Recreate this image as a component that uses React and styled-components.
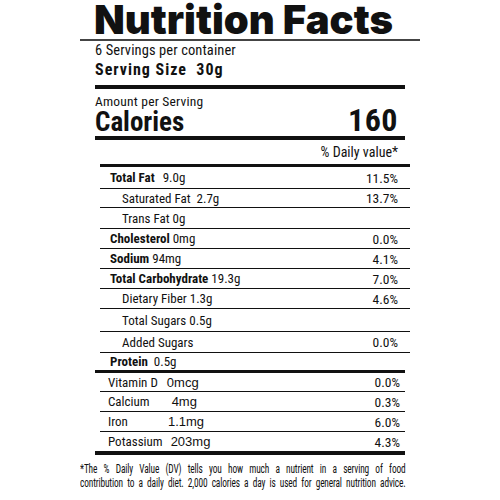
import React from "react";
import styled, { createGlobalStyle } from "styled-components";

const Global = createGlobalStyle`
  html, body { margin: 0; padding: 0; background: #fff; }
  body { font-family: "Roboto Condensed", "Roboto", "Liberation Sans", sans-serif; color: #111; }
`;

const Page = styled.div`
  width: 500px;
  height: 500px;
  box-sizing: border-box;
  padding-left: 80px;
  overflow: hidden;
`;

const Label = styled.div`
  width: 340px;
  display: flex;
  flex-direction: column;
`;

const Title = styled.h1`
  margin: 0;
  padding: 0 0 0 14px;
  height: 39px;
  line-height: 39px;
  font-family: "Inter", "Roboto", sans-serif;
  font-weight: 900;
  font-size: 40px;
  color: #111;
  border-bottom: 2px solid #444;
  white-space: nowrap;
`;

const Block = styled.div`
  margin: 0 15px;
  padding-bottom: ${(p) => p.$pb}px;
  border-bottom: 4px solid #111;
  display: flex;
  flex-direction: column;
`;

const Line = styled.div`
  margin-top: ${(p) => p.$mt}px;
  font-size: ${(p) => p.$size}px;
  font-weight: ${(p) => (p.$bold ? 700 : 400)};
  line-height: ${(p) => p.$lh}px;
  letter-spacing: ${(p) => p.$ls || 0}px;
  white-space: pre;
`;

const CalRow = styled.div`
  display: flex;
  justify-content: space-between;
  align-items: baseline;
  font-weight: 700;
  font-size: 27px;
  line-height: 22px;
  padding-right: 7px;
`;

const CalNumber = styled.span`
  font-size: 32px;
  letter-spacing: 0.5px;
`;

const NutrientTable = styled.div`
  margin: 0 10px 0 20px;
  display: flex;
  flex-direction: column;
`;

const HeadRow = styled.div`
  display: flex;
  align-items: center;
  justify-content: flex-end;
  height: 24px;
  padding-right: 12px;
  border-bottom: 3px solid #111;
  font-size: 14px;
`;

const Row = styled.div`
  display: flex;
  align-items: center;
  justify-content: space-between;
  height: ${(p) => p.$h}px;
  border-bottom: 1px solid #111;
  padding: 0 12px 0 ${(p) => (p.$indent ? 22 : 10)}px;
  font-size: 13px;
  &:last-child { border-bottom: none; }
`;

const Name = styled.span`
  white-space: nowrap;
  font-weight: ${(p) => (p.$bold ? 700 : 400)};
`;

const Amount = styled.span`
  font-weight: 400;
  margin-left: ${(p) => p.$gap}px;
`;

const Pct = styled.span`
  font-size: 13.5px;
`;

const VitaminTable = styled.div`
  margin: 0 15px;
  border-top: 3px solid #111;
  border-bottom: 4px solid #111;
  display: flex;
  flex-direction: column;
`;

const VRow = styled.div`
  margin-left: 5px;
  display: flex;
  align-items: center;
  justify-content: space-between;
  height: ${(p) => p.$h}px;
  border-bottom: 1px solid #111;
  padding: 0 5px 0 8px;
  font-size: 13px;
  &:last-child { border-bottom: none; }
`;

const VValue = styled.span`
  font-family: "Liberation Sans", sans-serif;
  font-size: 13px;
  margin-left: ${(p) => p.$gap}px;
`;

const FootWrap = styled.div`
  width: 325px;
  height: 36px;
  margin-top: 7px;
`;

const Foot = styled.p`
  margin: 0;
  width: 434px;
  font-size: 12.5px;
  line-height: 14px;
  letter-spacing: -0.2px;
  text-align: justify;
  text-align-last: justify;
  transform: scaleX(0.75);
  transform-origin: left top;
`;

const nutrients = [
  { name: "Total Fat", bold: true, value: "9.0g", gap: 8, pct: "11.5%", h: 21 },
  { name: "Saturated Fat", value: "2.7g", gap: 6, pct: "13.7%", indent: true, h: 18 },
  { name: "Trans Fat", value: "0g", gap: 3, pct: "", indent: true, h: 20 },
  { name: "Cholesterol", bold: true, value: "0mg", gap: 3, pct: "0.0%", h: 19 },
  { name: "Sodium", bold: true, value: "94mg", gap: 3, pct: "4.1%", h: 19 },
  { name: "Total Carbohydrate", bold: true, value: "19.3g", gap: 3, pct: "7.0%", h: 19 },
  { name: "Dietary Fiber", value: "1.3g", gap: 3, pct: "4.6%", indent: true, h: 19 },
  { name: "Total Sugars", value: "0.5g", gap: 3, pct: "", indent: true, h: 22 },
  { name: "Added Sugars", value: "", gap: 0, pct: "0.0%", indent: true, h: 20 },
  { name: "Protein", bold: true, value: "0.5g", gap: 6, pct: "", h: 17 },
];

const vitamins = [
  { name: "Vitamin D", value: "0mcg", gap: 9, pct: "0.0%", h: 18 },
  { name: "Calcium", value: "4mg", gap: 22, pct: "0.3%", h: 19 },
  { name: "Iron", value: "1.1mg", gap: 40, pct: "6.0%", h: 19 },
  { name: "Potassium", value: "203mg", gap: 8, pct: "4.3%", h: 19 },
];

export default function App() {
  return (
    <>
      <Global />
      <Page>
        <Label>
          <Title>Nutrition Facts</Title>
          <Block $pb={6}>
            <Line $mt={2} $size={14.5} $lh={16} $ls={0.1}>6 Servings per container</Line>
            <Line $mt={2} $size={16} $lh={18} $ls={1} $bold>{"Serving Size  30g"}</Line>
          </Block>
          <Block $pb={3}>
            <Line $mt={5} $size={13.5} $lh={15} $ls={0.2}>Amount per Serving</Line>
            <CalRow>
              <span>Calories</span>
              <CalNumber>160</CalNumber>
            </CalRow>
          </Block>
          <NutrientTable>
            <HeadRow>% Daily value*</HeadRow>
            {nutrients.map((n) => (
              <Row key={n.name} $indent={n.indent} $h={n.h}>
                <Name $bold={n.bold}>
                  {n.name}
                  {n.value && <Amount $gap={n.gap}>{n.value}</Amount>}
                </Name>
                <Pct>{n.pct}</Pct>
              </Row>
            ))}
          </NutrientTable>
          <VitaminTable>
            {vitamins.map((v) => (
              <VRow key={v.name} $h={v.h}>
                <Name>
                  {v.name}
                  <VValue $gap={v.gap}>{v.value}</VValue>
                </Name>
                <Pct>{v.pct}</Pct>
              </VRow>
            ))}
          </VitaminTable>
          <FootWrap>
            <Foot>
              *The % Daily Value (DV) tells you how much a nutrient in a serving of food
              <br />
              contribution to a daily diet. 2,000 calories a day is used for general nutrition advice.
            </Foot>
          </FootWrap>
        </Label>
      </Page>
    </>
  );
}
